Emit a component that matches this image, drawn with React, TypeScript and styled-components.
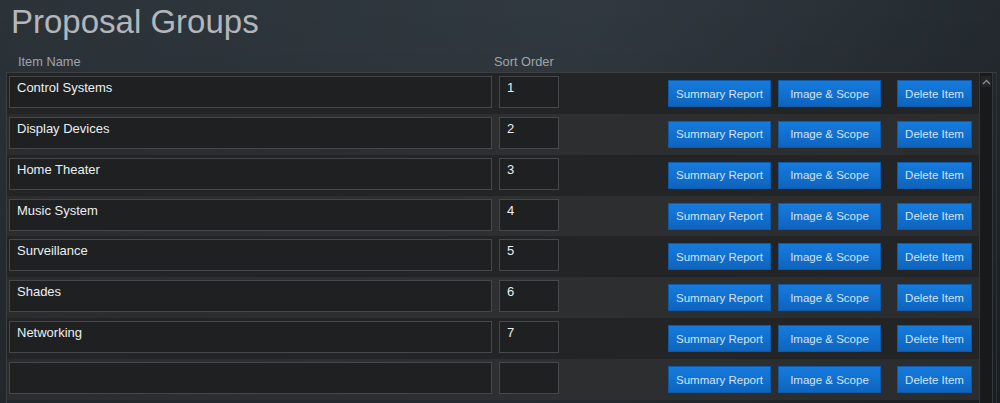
import * as React from "react";
import styled, { createGlobalStyle } from "styled-components";

type Group = {
  name: string;
  sort: string;
};

const groups: Group[] = [
  { name: "Control Systems", sort: "1" },
  { name: "Display Devices", sort: "2" },
  { name: "Home Theater", sort: "3" },
  { name: "Music System", sort: "4" },
  { name: "Surveillance", sort: "5" },
  { name: "Shades", sort: "6" },
  { name: "Networking", sort: "7" },
  { name: "", sort: "" },
];

const App: React.FC = () => {
  return (
    <Page>
      <GlobalStyle />
      <Title>Proposal Groups</Title>
      <Header>
        <HeaderCell $width={476}>Item Name</HeaderCell>
        <HeaderCell>Sort Order</HeaderCell>
      </Header>
      <Frame>
        <Rows>
          {groups.map((g, i) => (
            <Row key={i} $odd={i % 2 === 0}>
              <Field $width={483} defaultValue={g.name} readOnly />
              <Field $width={60} defaultValue={g.sort} readOnly />
              <Actions>
                <Button $width={103}>Summary Report</Button>
                <Button $width={103}>Image &amp; Scope</Button>
                <Button $width={75} $gap={16}>
                  Delete Item
                </Button>
              </Actions>
            </Row>
          ))}
        </Rows>
        <Scrollbar>
          <ScrollUp>
            <svg width="9" height="6" viewBox="0 0 9 6">
              <polyline
                points="1,5 4.5,1.5 8,5"
                fill="none"
                stroke="#8a8d90"
                strokeWidth="1.3"
              />
            </svg>
          </ScrollUp>
        </Scrollbar>
      </Frame>
    </Page>
  );
};

const GlobalStyle = createGlobalStyle`
  html, body {
    margin: 0;
    padding: 0;
    height: 403px;
    overflow: hidden;
    background: #262c31;
  }
  * {
    box-sizing: border-box;
  }
`;

const Page = styled.div`
  width: 1000px;
  height: 403px;
  overflow: hidden;
  font-family: "Liberation Sans", Arial, sans-serif;
  background:
    linear-gradient(to bottom, rgba(0, 0, 0, 0) 0%, rgba(0, 0, 0, 0.25) 100%),
    linear-gradient(100deg, #2b3339 0%, #313940 55%, #2a3137 77%, #21272c 100%);
`;

const Title = styled.h1`
  margin: 0;
  padding: 3px 0 0 11px;
  height: 41px;
  font-size: 33px;
  line-height: 38px;
  font-weight: normal;
  color: #b3b7bb;
`;

const Header = styled.div`
  display: flex;
  height: 31px;
  padding: 13px 0 0 18px;
`;

const HeaderCell = styled.div<{ $width?: number }>`
  width: ${(p) => (p.$width ? `${p.$width}px` : "auto")};
  font-size: 12.8px;
  line-height: 15px;
  color: #a0a4a8;
`;

const Frame = styled.div`
  display: flex;
  margin-left: 6px;
  width: 991px;
  height: 331px;
  border-top: 1px solid #3c3f42;
  border-left: 1px solid #3a3d40;
  border-right: 1px solid #2f3234;
`;

const Rows = styled.div`
  width: 972px;
  display: flex;
  flex-direction: column;
`;

const Row = styled.div<{ $odd: boolean }>`
  display: flex;
  align-items: flex-start;
  gap: 7px;
  height: 40.86px;
  flex-shrink: 0;
  padding: 3px 7px 0 2px;
  background: ${(p) =>
    p.$odd
      ? "#222426"
      : "linear-gradient(90deg, #2a2c2e 0%, #2d2f31 50%, #2a2c2e 100%)"};
`;

const Field = styled.textarea<{ $width: number }>`
  width: ${(p) => p.$width}px;
  height: 32px;
  margin: 0;
  padding: 3px 7px 0;
  resize: none;
  overflow: hidden;
  border: 1px solid #45484b;
  border-radius: 0;
  background: #1f2022;
  color: #eceff2;
  font-family: "Liberation Sans", Arial, sans-serif;
  font-size: 13px;
  line-height: 15px;
  outline: none;
`;

const Actions = styled.div`
  display: flex;
  margin-left: auto;
  margin-top: 4px;
`;

const Button = styled.button<{ $width: number; $gap?: number }>`
  width: ${(p) => p.$width}px;
  height: 27px;
  margin: 0 0 0 ${(p) => p.$gap ?? 7}px;
  padding: 0;
  border: 1px solid #0c5aa9;
  border-radius: 0;
  background: linear-gradient(to bottom, #157bdc 0%, #1270cf 50%, #0e64bd 100%);
  color: #d5e3f2;
  font-family: "Liberation Sans", Arial, sans-serif;
  font-size: 11.5px;
  cursor: pointer;

  &:first-child {
    margin-left: 0;
  }
`;

const Scrollbar = styled.div`
  width: 14px;
  margin-right: 3px;
  background: #17191b;
  border-left: 1px solid #35383b;
  border-right: 1px solid #35383b;
  padding-top: 3px;
`;

const ScrollUp = styled.div`
  height: 11px;
  margin: 0 1px;
  display: flex;
  align-items: center;
  justify-content: center;
  background: #232528;
`;

export default App;
